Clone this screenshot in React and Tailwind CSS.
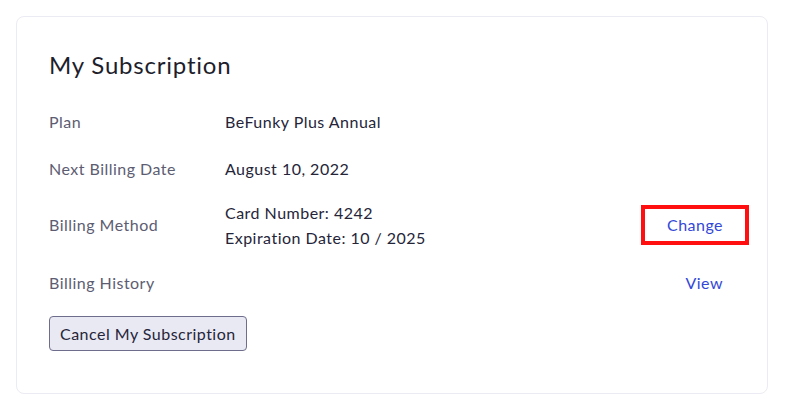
import React from 'react';

const rows = [
    { label: 'Plan', value: ['BeFunky Plus Annual'], h: 'h-[47px]' },
    { label: 'Next Billing Date', value: ['August 10, 2022'], h: 'h-[47px]' },
    { label: 'Billing Method', value: ['Card Number: 4242', 'Expiration Date: 10 / 2025'], h: 'h-[65px]', action: 'Change', focus: true },
    { label: 'Billing History', value: [], h: 'h-[51px]', action: 'View' },
];

export default function App() {
    return (
        <div className="w-[797px] h-[418px] bg-white p-4 tracking-[0.03em]" style={{ fontFamily: 'Lato, "Noto Sans", sans-serif' }}>
            <div className="w-[752px] border border-[#ebebf3] rounded-lg pl-8 pr-[22px] pt-8 pb-[42px]">
                <h2 className="text-2xl leading-8 tracking-[0.033em] text-[#1e1e2d] mb-[17px]">My Subscription</h2>

                {rows.map((row) => (
                    <div key={row.label} className={`flex items-center ${row.h}`}>
                        <div className="w-[176px] text-base text-[#5d5d72]">{row.label}</div>
                        <div className="flex-1 text-base leading-[25px] text-[#25253a]">
                            {row.value.map((v) => (
                                <div key={v}>{v}</div>
                            ))}
                        </div>
                        {row.action && (
                            <button
                                className={`h-8 px-[22px] text-base text-[#3348d8] ${row.focus ? 'outline-4 outline-[#ff0f0f]' : ''}`}
                            >
                                {row.action}
                            </button>
                        )}
                    </div>
                ))}

                <button className="mt-2 h-[35px] px-[10px] text-base text-[#25253a] bg-[#e9e9f3] border border-[#6e6e8c] rounded">
                    Cancel My Subscription
                </button>
            </div>
        </div>
    );
}
